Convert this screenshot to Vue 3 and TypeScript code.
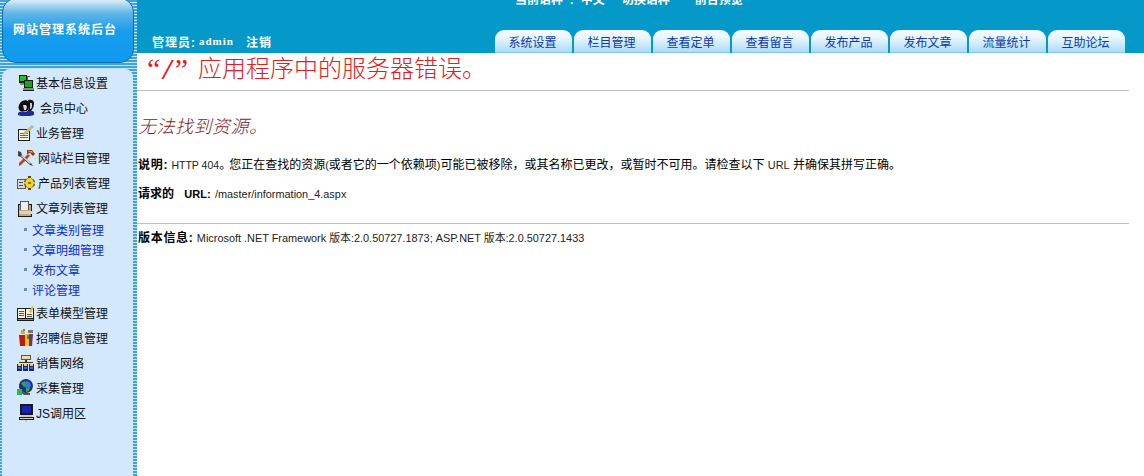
<script setup lang="ts">
interface Shape { f: string; d: string }
interface MenuItem { label: string; gap?: string; sub?: boolean; icon?: Shape[] }

const K = '#1a1a1a'
const icons: Record<string, Shape[]> = {
  info: [
    { f: K, d: 'M2 1h8v8H2z' }, { f: '#22c02a', d: 'M3 2h6v5H3z' }, { f: '#b03030', d: 'M10 2h3v1h-2v3h-1z' },
    { f: '#888', d: 'M3 9h6v2H3z' },
    { f: K, d: 'M7 6h9v8H7z' }, { f: '#17a51f', d: 'M8 7h7v6H8z' }, { f: '#7f8f7f', d: 'M6 14h11v3H6z' }, { f: K, d: 'M6 16h11v1H6z' }
  ],
  member: [
    { f: '#0c0c0c', d: 'M3 4c2-3 7-4 9-1 1 3 0 7-2 9H3C1 10 1 7 3 4z' },
    { f: '#d8d8dc', d: 'M6 6h3l1 2-1 3H7z' },
    { f: '#111', d: 'M11 1c3-1 6 0 6 3s-1 6-3 8h-3l1-5z' },
    { f: '#c8c8cc', d: 'M13 4h2v4l-1 2h-1z' },
    { f: '#1c2a9c', d: 'M1 14c2-2 6-2 8-1 2-2 6-2 8 0v3l-4 1H4l-3-1z' }
  ],
  business: [
    { f: K, d: 'M1 5h12v12H1z' }, { f: '#f7f3de', d: 'M2 6h10v10H2z' },
    { f: '#4a66c8', d: 'M3 9h8v1H3zM3 11h8v1H3zM3 13h8v1H3z' },
    { f: '#b0b0b0', d: 'M7 8l8-7 2 2-8 7-3 1z' }, { f: '#e8c040', d: 'M8 8l6-5 1 1-6 5z' }
  ],
  tools: [
    { f: '#b5491f', d: 'M2 14L11 5l2 2-9 9-2 1z' }, { f: '#9a3510', d: 'M10 1h5l3 4-2 2-3-3-3 1z' },
    { f: '#e4a850', d: 'M11 2h4l1 2-4-1z' },
    { f: '#444', d: 'M1 2l3 1 1 3 9 8 2 3-3-1-9-8-3-1z' }, { f: '#d8d8d8', d: 'M5 6l9 8-1 1-9-8z' }
  ],
  product: [
    { f: '#555', d: 'M0 5h9v10H0z' }, { f: '#d8d8e0', d: 'M1 6h7v8H1z' }, { f: '#444', d: 'M2 8h4v1H2zM2 11h4v1H2z' },
    { f: '#5a4c08', d: 'M11 2h3v2l2 1 2 2-1 2 1 2-2 2-2 1v2h-3v-2l-2-1-2-2 1-2-1-2 2-2 2-1z' },
    { f: '#f6d420', d: 'M11 4h3l2 2 1 3-1 3-2 2h-3l-2-2-1-3 1-3z' }, { f: '#8a7410', d: 'M11 8h3v2h-3z' }
  ],
  article: [
    { f: K, d: 'M1 5h14v13H1z' }, { f: '#c9a878', d: 'M2 6h12v11H2z' },
    { f: '#555', d: 'M3 2h9v9H3z' }, { f: '#eeeef4', d: 'M4 3h7v8H4z' },
    { f: '#d5d5d5', d: 'M2 12h13l2 3H3z' }
  ],
  form: [
    { f: K, d: 'M0 4h17v13H0z' }, { f: '#f4f0e0', d: 'M1 5h7v9H1zM9 5h7v9H9z' },
    { f: '#555', d: 'M2 7h5v1H2zM2 9h5v1H2zM2 11h5v1H2zM10 10h5v1h-5zM10 12h5v1h-5z' },
    { f: '#8a8a8a', d: 'M1 15h15v1H1z' }, { f: '#e0c030', d: 'M12 8l3-6 2 1-3 6z' }
  ],
  recruit: [
    { f: '#bb1a10', d: 'M2 6h6v11H3z' }, { f: '#f2c020', d: 'M8 5h4v12H8z' }, { f: '#7a2a78', d: 'M12 5h4l-1 12h-3z' },
    { f: '#e8a020', d: 'M4 1l3 0 1 4H4z' }, { f: '#777', d: 'M11 1h5v3h-5zM6 0h2v2H6z' }, { f: '#20a030', d: 'M10 6h2v4h-2z' }
  ],
  network: [
    { f: '#555', d: 'M4 1h10v5H4z' }, { f: '#f0dca0', d: 'M5 2h8v3H5z' }, { f: '#333', d: 'M8 6h2v2H8zM2 8h14v1H2z' },
    { f: '#18207a', d: 'M0 10h5v7H0zM6 10h5v7H6zM12 10h5v7h-5z' },
    { f: '#f2d040', d: 'M1 10h3v2H1zM7 10h3v2H7zM13 10h3v2h-3z' }, { f: '#3a6ad0', d: 'M1 13h3v2H1zM7 13h3v2H7zM13 13h3v2h-3z' }
  ],
  collect: [
    { f: '#1c2f8c', d: 'M9 0a7 7 0 1 1-.1 0z' }, { f: '#2f7ae0', d: 'M9 2a5 5 0 0 1 5 5l-3 2-4-1z' },
    { f: '#39a83a', d: 'M4 4l4-2 1 3-2 3zM9 9l4-1-1 4-3 1z' },
    { f: '#555', d: 'M5 11l3 3h5v2H7l-4-3z' }, { f: '#20c040', d: 'M0 10h5v6H0z' }
  ],
  js: [
    { f: K, d: 'M3 0h13v11H3z' }, { f: '#1a22b0', d: 'M5 2h9v7H5z' }, { f: '#c8c8c8', d: 'M4 11h11v2H4z' },
    { f: K, d: 'M2 13h15v3H2z' }, { f: '#d8d8d8', d: 'M3 14h13v1H3z' }, { f: '#e8d85a', d: 'M8 16h2v2H8z' }
  ]
}

const menu: MenuItem[] = [
  { label: '基本信息设置', icon: icons.info, gap: 'g1' },
  { label: '会员中心', icon: icons.member, gap: 'g5' },
  { label: '业务管理', icon: icons.business, gap: 'g1' },
  { label: '网站栏目管理', icon: icons.tools, gap: 'g3' },
  { label: '产品列表管理', icon: icons.product, gap: 'g3' },
  { label: '文章列表管理', icon: icons.article, gap: 'g1' },
  { label: '文章类别管理', sub: true },
  { label: '文章明细管理', sub: true },
  { label: '发布文章', sub: true },
  { label: '评论管理', sub: true },
  { label: '表单模型管理', icon: icons.form, gap: 'g1' },
  { label: '招聘信息管理', icon: icons.recruit, gap: 'g1' },
  { label: '销售网络', icon: icons.network, gap: 'g1' },
  { label: '采集管理', icon: icons.collect, gap: 'g1' },
  { label: 'JS调用区', icon: icons.js, gap: 'g1' }
]

const tabs: string[] = ['系统设置', '栏目管理', '查看定单', '查看留言', '发布产品', '发布文章', '流量统计', '互助论坛']
</script>

<template>
  <div class="page">
    <aside class="side">
      <div class="logo">网站管理系统后台</div>
      <nav class="panel">
        <a
          v-for="item in menu"
          :key="item.label"
          class="item"
          :class="[item.sub ? 'sub' : 'top', item.gap]"
        >
          <svg v-if="item.icon" class="ico" width="18" height="18" viewBox="0 0 18 18">
            <path v-for="(s, i) in item.icon" :key="i" :fill="s.f" :d="s.d" />
          </svg>
          <i v-else class="dot"></i>
          <span>{{ item.label }}</span>
        </a>
      </nav>
    </aside>

    <div class="right">
      <header class="head">
        <div class="lang"><span class="cur">当前语种 : 中文</span><span class="sw">切换语种</span><span class="pre">前台预览</span></div>
        <div class="bar">
          <div class="user"><span class="role">管理员:</span><span class="name">admin</span><span class="out">注销</span></div>
          <div class="tabs">
            <a v-for="t in tabs" :key="t" class="tab">{{ t }}</a>
          </div>
        </div>
      </header>

      <main class="main">
        <h1 class="title"><span class="quote">“<em>/</em>”</span>应用程序中的服务器错误。</h1>
        <hr class="rule" />
        <h2 class="sub-title">无法找到资源。</h2>
        <p class="line first"><b class="label">说明:</b> <span class="en http">HTTP 404</span><span class="mark">。</span>您正在查找的资源<span class="en">(</span>或者它的一个依赖项<span class="en">)</span>可能已被移除，或其名称已更改，或暂时不可用。请检查以下 <span class="en">URL</span> 并确保其拼写正确。</p>
        <p class="line url"><b>请求的 <span class="en url-key">URL:</span></b> <span class="en path">/master/information_4.aspx</span></p>
        <hr class="rule lower" />
        <p class="line ver"><b class="label">版本信息:</b> <span class="en">Microsoft .NET Framework 版本:2.0.50727.1873; ASP.NET 版本:2.0.50727.1433</span></p>
      </main>
    </div>
  </div>
</template>

<style>
html, body { margin: 0; overflow: hidden; background: #fff; }
</style>

<style scoped>
.page {
  display: flex;
  height: 476px;
  overflow: hidden;
  font-family: "Liberation Sans", "Noto Sans CJK SC", sans-serif;
  font-size: 12px;
  color: #000;
}
.side {
  width: 137px;
  flex: none;
  padding: 0 4px 0 2px;
  box-sizing: border-box;
  background: repeating-linear-gradient(180deg, #3fa3d6 0 2px, #c4e5f4 2px 3px);
  display: flex;
  flex-direction: column;
}
.logo {
  height: 65px;
  margin: -2px -1px 0 0;
  box-sizing: border-box;
  padding: 23px 6px 0 0;
  border-radius: 14px;
  border: 1px solid #0d6fa6;
  background: linear-gradient(180deg, #e4f1f8 0, #62b6e6 14px, #169ded 32px, #0f9af0 100%);
  color: #fff;
  font-weight: 700;
  letter-spacing: 1px;
  line-height: 16px;
  text-align: center;
  white-space: nowrap;
}
.panel {
  flex: 1;
  margin-top: 6px;
  padding-top: 1px;
  background: #d4e8fd;
  border-radius: 8px 8px 0 0;
}
.item {
  display: flex;
  align-items: center;
  white-space: nowrap;
}
.top { height: 25px; padding-left: 15px; color: #111; }
.sub { height: 18px; padding: 0 0 2px 22px; color: #0b2fc8; }
.ico { flex: none; }
.g1 span { margin-left: 1px; }
.g3 span { margin-left: 3px; }
.g5 span { margin-left: 5px; }
.dot {
  width: 3px;
  height: 3px;
  margin-right: 5px;
  background: #6a8fb0;
}
.right {
  flex: 1;
  min-width: 0;
  display: flex;
  flex-direction: column;
}
.head {
  height: 53px;
  flex: none;
  background: #0599c9;
  color: #fff;
  font-weight: 700;
  overflow: hidden;
}
.lang {
  display: flex;
  height: 8px;
  margin-top: -8px;
  padding-left: 378px;
  line-height: 16px;
  white-space: nowrap;
}
.cur { word-spacing: 3.5px; }
.sw { margin-left: 17px; }
.pre { margin-left: 25px; }
.bar {
  display: flex;
  justify-content: space-between;
  align-items: flex-end;
  height: 53px;
  padding: 0 19px 0 15px;
  box-sizing: border-box;
}
.user {
  display: flex;
  align-items: center;
  height: 16px;
  margin-bottom: 4px;
  white-space: nowrap;
}
.role { letter-spacing: 1px; }
.name {
  margin-left: 3px;
  font-family: "Liberation Serif", serif;
  letter-spacing: 1px;
  font-size: 11px;
}
.out { margin-left: 12px; letter-spacing: 1px; }
.tabs { display: flex; gap: 2px; }
.tab {
  width: 77px;
  height: 23px;
  box-sizing: border-box;
  padding: 5px 2px 0 0;
  line-height: 17px;
  text-align: center;
  border-radius: 9px 9px 0 0;
  border-bottom: 1px solid #84c4f0;
  background: linear-gradient(180deg, #f6fcff 0, #e8f6fd 35%, #abdcf8 100%);
  color: #0b3aa8;
  font-weight: 400;
}
.main { flex: 1; padding-left: 1px; overflow: hidden; }
.title {
  margin: 0;
  height: 37px;
  font-size: 24px;
  font-weight: 300;
  line-height: 31px;
  color: #e02020;
  white-space: nowrap;
}
.quote {
  display: inline-block;
  width: 51px;
  font-family: "Liberation Serif", serif;
  font-size: 30px;
  line-height: 31px;
  letter-spacing: 3px;
  padding-left: 9px;
  vertical-align: top;
}
.quote em { font-style: italic; font-weight: 700; }
.rule {
  height: 1px;
  margin: 0 15px 0 -1px;
  border: 0;
  background: #c0c0c0;
}
.sub-title {
  margin: 24px 0 0;
  height: 26px;
  font-size: 18px;
  font-weight: 300;
  font-style: italic;
  letter-spacing: .5px;
  line-height: 24px;
  color: #7a1a1a;
}
.line { margin: 0; line-height: 16px; white-space: nowrap; }
.first { margin-top: 16px; }
.url { margin-top: 13px; }
.lower { margin-top: 21px; }
.ver { margin-top: 6px; }
.label { letter-spacing: .7px; }
.en { font-size: 10.9px; color: #222; letter-spacing: 0; }
b .en { color: #000; font-size: 11px; }
.http { font-size: 10.5px; }
.mark { margin-right: -2px; }
.url-key { margin-left: 7px; }
.path { margin-left: 1px; }
</style>
